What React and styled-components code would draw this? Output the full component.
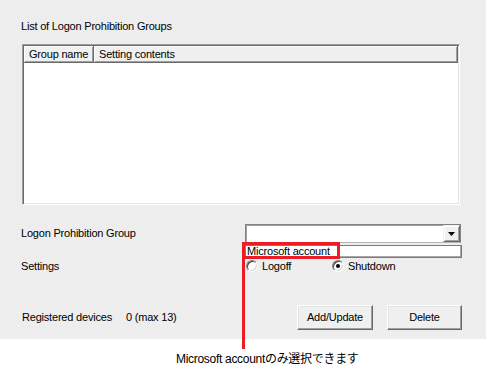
import React from 'react';
import styled, { createGlobalStyle } from 'styled-components';

const GlobalStyle = createGlobalStyle`
  html, body {
    margin: 0;
    padding: 0;
    background: #fff;
  }
  body {
    font-family: 'Liberation Sans', Arial, sans-serif;
    font-size: 11px;
    color: #000;
  }
`;

const Page = styled.div`
  position: relative;
  width: 486px;
  height: 378px;
  overflow: hidden;
`;

const Panel = styled.div`
  box-sizing: border-box;
  height: 339px;
  padding: 20px 0 0 21px;
  background-color: #eeeeee;
  background-image: repeating-conic-gradient(#f2f2f2 0 25%, #e9e9e9 0 50%);
  background-size: 2px 2px;
  letter-spacing: -0.2px;
  line-height: 13px;
`;

const Title = styled.div`
  height: 13px;
`;

const ListBox = styled.div`
  box-sizing: border-box;
  margin: 11px 0 0 1px;
  width: 438px;
  height: 161px;
  padding: 1px;
  background: #fff;
  border: 1px solid;
  border-color: #a0a0a0 #fff #fff #a0a0a0;
  box-shadow: inset 1px 1px #696969, inset -1px -1px #e3e3e3;
`;

const Header = styled.div`
  display: flex;
  height: 17px;
`;

const HeaderCell = styled.div`
  box-sizing: border-box;
  width: ${p => (p.$width ? `${p.$width}px` : 'auto')};
  flex: ${p => (p.$width ? 'none' : '1')};
  padding-left: 5px;
  line-height: 16px;
  background: #f0f0f0;
  border-right: 1px solid #696969;
  border-bottom: 1px solid #696969;
  box-shadow: inset 1px 1px #fff, inset -1px -1px #a0a0a0;
  white-space: nowrap;
`;

const Form = styled.div`
  display: grid;
  grid-template-columns: 224px 217px;
  grid-template-rows: 21px 14px 14px;
  margin-top: 19px;
`;

const Label = styled.div`
  line-height: ${p => p.$lh || 14}px;
  align-self: start;
`;

const Combo = styled.div`
  box-sizing: border-box;
  display: flex;
  justify-content: flex-end;
  width: 216px;
  height: 19px;
  background: #fff;
  border: 1px solid;
  border-color: #828282 #828282 #b4b4b4 #828282;
  box-shadow: inset 1px 1px #a0a0a0;
`;

const DropButton = styled.div`
  box-sizing: border-box;
  display: flex;
  align-items: center;
  justify-content: center;
  width: 17px;
  height: 17px;
  background: #f0f0f0;
  border: 1px solid;
  border-color: #f0f0f0 #696969 #696969 #f0f0f0;
  box-shadow: inset 1px 1px #fff, inset -1px -1px #a0a0a0;
`;

const InputWrap = styled.div`
  position: relative;
  width: 217px;
  height: 13px;
`;

const Input = styled.div`
  box-sizing: border-box;
  height: 13px;
  padding-left: 1px;
  line-height: 11px;
  background: #fff;
  border: 1px solid #7a7a7a;
  box-shadow: inset -1px -1px #a8a8a8;
  white-space: nowrap;
`;

const Highlight = styled.div`
  position: absolute;
  left: -3px;
  top: -3px;
  box-sizing: border-box;
  width: 98px;
  height: 17px;
  border: 3px solid #ec1c24;
`;

const Radios = styled.div`
  display: flex;
  align-items: center;
  height: 14px;
  padding-left: 1px;
`;

const RadioItem = styled.div`
  display: flex;
  align-items: center;
  gap: 4px;
  width: ${p => p.$width}px;
  line-height: 14px;
`;

const RadioCircle = styled.span`
  box-sizing: border-box;
  display: flex;
  align-items: center;
  justify-content: center;
  width: 12px;
  height: 12px;
  border-radius: 50%;
  background: #fff;
  border: 1px solid;
  border-color: #808080 #fff #fff #808080;
  box-shadow: inset 1px 1px #404040, inset -1px -1px #d4d4d4;
`;

const RadioDot = styled.span`
  width: 4px;
  height: 4px;
  border-radius: 50%;
  background: #000;
`;

const BottomRow = styled.div`
  display: flex;
  align-items: center;
  width: 441px;
  height: 25px;
  margin-top: 32px;
`;

const Devices = styled.div`
  width: 104px;
  margin-left: 1px;
`;

const Buttons = styled.div`
  display: flex;
  gap: 14px;
  margin-left: auto;
`;

const Button = styled.button`
  box-sizing: border-box;
  width: ${p => p.$width}px;
  height: 25px;
  padding: 0;
  font: inherit;
  letter-spacing: inherit;
  color: #000;
  background: #f0f0f0;
  border: 1px solid;
  border-color: #fff #696969 #696969 #fff;
  box-shadow: inset -1px -1px #a0a0a0, inset 1px 1px #e3e3e3;
`;

const Note = styled.div`
  padding: 13px 0 0 176px;
  font-family: 'Liberation Sans', 'Noto Sans CJK JP', sans-serif;
  font-size: 12px;
  line-height: 14px;
  letter-spacing: -0.3px;
  white-space: nowrap;
`;

const Leader = styled.div`
  position: absolute;
  left: 242px;
  top: 259px;
  width: 3px;
  height: 90px;
  background: #ec1c24;
`;

function Radio({ checked, width, children }) {
  return (
    <RadioItem $width={width}>
      <RadioCircle>{checked && <RadioDot />}</RadioCircle>
      {children}
    </RadioItem>
  );
}

export default function App() {
  return (
    <Page>
      <GlobalStyle />
      <Panel>
        <Title>List of Logon Prohibition Groups</Title>
        <ListBox>
          <Header>
            <HeaderCell $width={70}>Group name</HeaderCell>
            <HeaderCell>Setting contents</HeaderCell>
          </Header>
        </ListBox>

        <Form>
          <Label $lh={19}>Logon Prohibition Group</Label>
          <Combo>
            <DropButton>
              <svg width="7" height="4" viewBox="0 0 7 4">
                <polygon points="0,0 7,0 3.5,4" fill="#000" />
              </svg>
            </DropButton>
          </Combo>

          <div />
          <InputWrap>
            <Input>Microsoft account</Input>
            <Highlight />
          </InputWrap>

          <Label>Settings</Label>
          <Radios>
            <Radio width={86}>Logoff</Radio>
            <Radio checked width={80}>Shutdown</Radio>
          </Radios>
        </Form>

        <BottomRow>
          <Devices>Registered devices</Devices>
          <span>0 (max 13)</span>
          <Buttons>
            <Button $width={76}>Add/Update</Button>
            <Button $width={75}>Delete</Button>
          </Buttons>
        </BottomRow>
      </Panel>
      <Note>Microsoft accountのみ選択できます</Note>
      <Leader />
    </Page>
  );
}
